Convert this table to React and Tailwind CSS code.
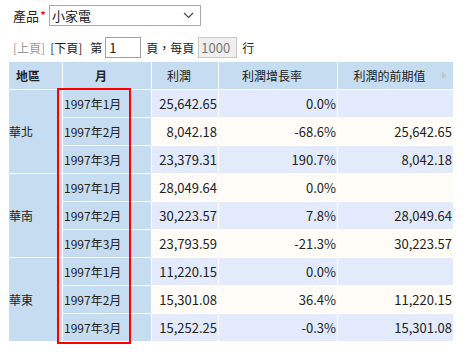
import React from "react";

// Pivot data: region -> months
const groups = [
  {
    region: "華北",
    rows: [
      ["1997年1月", "25,642.65", "0.0%", ""],
      ["1997年2月", "8,042.18", "-68.6%", "25,642.65"],
      ["1997年3月", "23,379.31", "190.7%", "8,042.18"],
    ],
  },
  {
    region: "華南",
    rows: [
      ["1997年1月", "28,049.64", "0.0%", ""],
      ["1997年2月", "30,223.57", "7.8%", "28,049.64"],
      ["1997年3月", "23,793.59", "-21.3%", "30,223.57"],
    ],
  },
  {
    region: "華東",
    rows: [
      ["1997年1月", "11,220.15", "0.0%", ""],
      ["1997年2月", "15,301.08", "36.4%", "11,220.15"],
      ["1997年3月", "15,252.25", "-0.3%", "15,301.08"],
    ],
  },
];

const font = { fontFamily: '"Noto Sans CJK TC", "Liberation Sans", sans-serif' };

export default function App() {
  let rowIndex = 0;

  return (
    <div className="w-[476px] h-[355px] bg-white text-[#222] overflow-hidden" style={font}>
      {/* product filter */}
      <div className="flex items-center h-[21px] mt-[5px] ml-[13px] text-[13px] leading-none">
        <span>產品</span>
        <span className="text-[#e00] ml-px">*</span>
        <div className="ml-[3px] w-[152px] h-[21px] border border-[#a9a9a9] flex items-center justify-between pl-[2px] pr-[6px]">
          <span>小家電</span>
          <svg width="11" height="7" viewBox="0 0 11 7" fill="none" stroke="#444" strokeWidth="1.1">
            <path d="M1 1l4.5 4.5L10 1" />
          </svg>
        </div>
      </div>

      {/* paging */}
      <div className="flex items-center h-[21px] mt-[11px] ml-[13px] text-[12px] leading-none">
        <span className="text-[#999]">[上頁]</span>
        <span className="ml-[5px]">[下頁]</span>
        <span className="ml-[8px]">第</span>
        <div className="ml-[3px] w-[36px] h-[21px] border border-[#a0a0a0] flex items-center pl-[3px] text-[13px]">1</div>
        <span className="ml-[5px]">頁，每頁</span>
        <div className="ml-[4px] w-[39px] h-[21px] border border-[#c8c8c8] bg-[#efefef] text-[#777] flex items-center pl-[2px] text-[13px]">1000</div>
        <span className="ml-[5px]">行</span>
      </div>

      {/* pivot table */}
      <div className="relative ml-[9px] mt-[4px] w-[445px]">
        <div className="grid grid-cols-[53px_88px_66px_118px_115px] auto-rows-[27px] gap-px bg-white text-[12px] leading-none">
          <div className="bg-[#c6dcf0] flex items-center pl-[7px] font-bold">地區</div>
          <div className="bg-[#c6dcf0] flex items-center justify-center pr-[12px] font-bold">月</div>
          <div className="bg-[#c6dcf0] flex items-center justify-center pr-[12px]">利潤</div>
          <div className="bg-[#c6dcf0] flex items-center justify-center pr-[12px]">利潤增長率</div>
          <div className="bg-[#c6dcf0] relative flex items-center justify-center pr-[12px]">
            利潤的前期值
            <svg className="absolute right-[7px] top-[10px]" width="4" height="7" viewBox="0 0 4 7">
              <path d="M0 0l4 3.5L0 7z" fill="#c4c4c4" />
            </svg>
          </div>

          {groups.map((g) => (
            <React.Fragment key={g.region}>
              <div className="bg-[#c6dcf0] row-span-3 flex items-center">{g.region}</div>
              {g.rows.map((r, i) => {
                rowIndex += 1;
                const bg = rowIndex % 2 === 1 ? "bg-[#e3eafc]" : "bg-[#fffcf7]";
                return (
                  <React.Fragment key={i}>
                    {i > 0 && null}
                    <div className="bg-[#c6dcf0] flex items-center pl-px">{r[0]}</div>
                    <div className={`${bg} flex items-center justify-end pr-px text-[13px]`}>{r[1]}</div>
                    <div className={`${bg} flex items-center justify-end pr-px text-[13px]`}>{r[2]}</div>
                    <div className={`${bg} flex items-center justify-end pr-px text-[13px]`}>{r[3]}</div>
                  </React.Fragment>
                );
              })}
            </React.Fragment>
          ))}
        </div>

        {/* highlight around month column */}
        <div className="absolute left-[48px] top-[26px] w-[74px] h-[256px] border-2 border-[#f00] pointer-events-none" />
      </div>
    </div>
  );
}
